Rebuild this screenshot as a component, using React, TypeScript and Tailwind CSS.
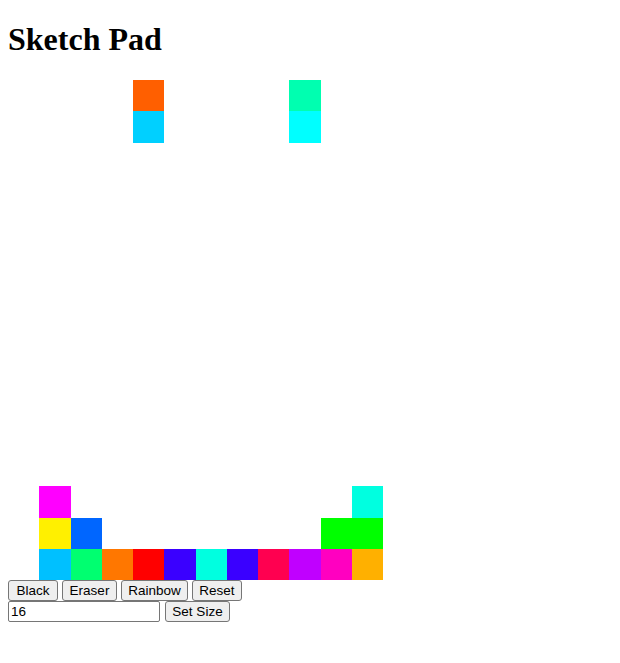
import React from "react";

const colored: Record<string, string> = {
  "0-4": "#ff5f00",
  "0-9": "#00ffb0",
  "1-4": "#00d0ff",
  "1-9": "#00ffff",
  "13-1": "#ff00ff",
  "13-11": "#00ffe0",
  "14-1": "#fff000",
  "14-2": "#0066ff",
  "14-10": "#00ff00",
  "14-11": "#00ff00",
  "15-1": "#00c0ff",
  "15-2": "#00ff70",
  "15-3": "#ff7700",
  "15-4": "#ff0000",
  "15-5": "#3a00ff",
  "15-6": "#00ffe0",
  "15-7": "#3a00ff",
  "15-8": "#ff0050",
  "15-9": "#c000ff",
  "15-10": "#ff00c0",
  "15-11": "#ffb000",
};

const btn =
  "h-[21px] px-0 bg-[#efefef] border border-[#767676] rounded-[3px] text-[13.5px] leading-[15px] text-black font-['Liberation_Sans',Arial,sans-serif] text-center";

export default function App() {
  const cells = [];
  for (let r = 0; r < 16; r++) {
    for (let c = 0; c < 16; c++) {
      const col = colored[`${r}-${c}`];
      cells.push(
        <div key={`${r}-${c}`} style={col ? { backgroundColor: col } : undefined} />
      );
    }
  }
  return (
    <div className="bg-white min-h-[663px] px-[8px] pt-[21px] font-['Liberation_Serif','Times_New_Roman',serif] text-black">
      <h1 className="text-[32px] font-bold leading-[37px] mb-[22px]">Sketch Pad</h1>
      <div className="grid grid-cols-16 grid-rows-16 w-[500px] h-[500px]">{cells}</div>
      <div className="flex gap-[4px]">
        <button className={`${btn} w-[50px]`}>Black</button>
        <button className={`${btn} w-[55px]`}>Eraser</button>
        <button className={`${btn} w-[67px]`}>Rainbow</button>
        <button className={`${btn} w-[50px]`}>Reset</button>
      </div>
      <div className="flex gap-[5px]">
        <input
          defaultValue="16"
          className="w-[152px] h-[21px] px-[2px] border border-[#767676] rounded-[2px] text-[13.5px] font-['Liberation_Sans',Arial,sans-serif] outline-none"
        />
        <button className={`${btn} w-[65px]`}>Set Size</button>
      </div>
    </div>
  );
}
